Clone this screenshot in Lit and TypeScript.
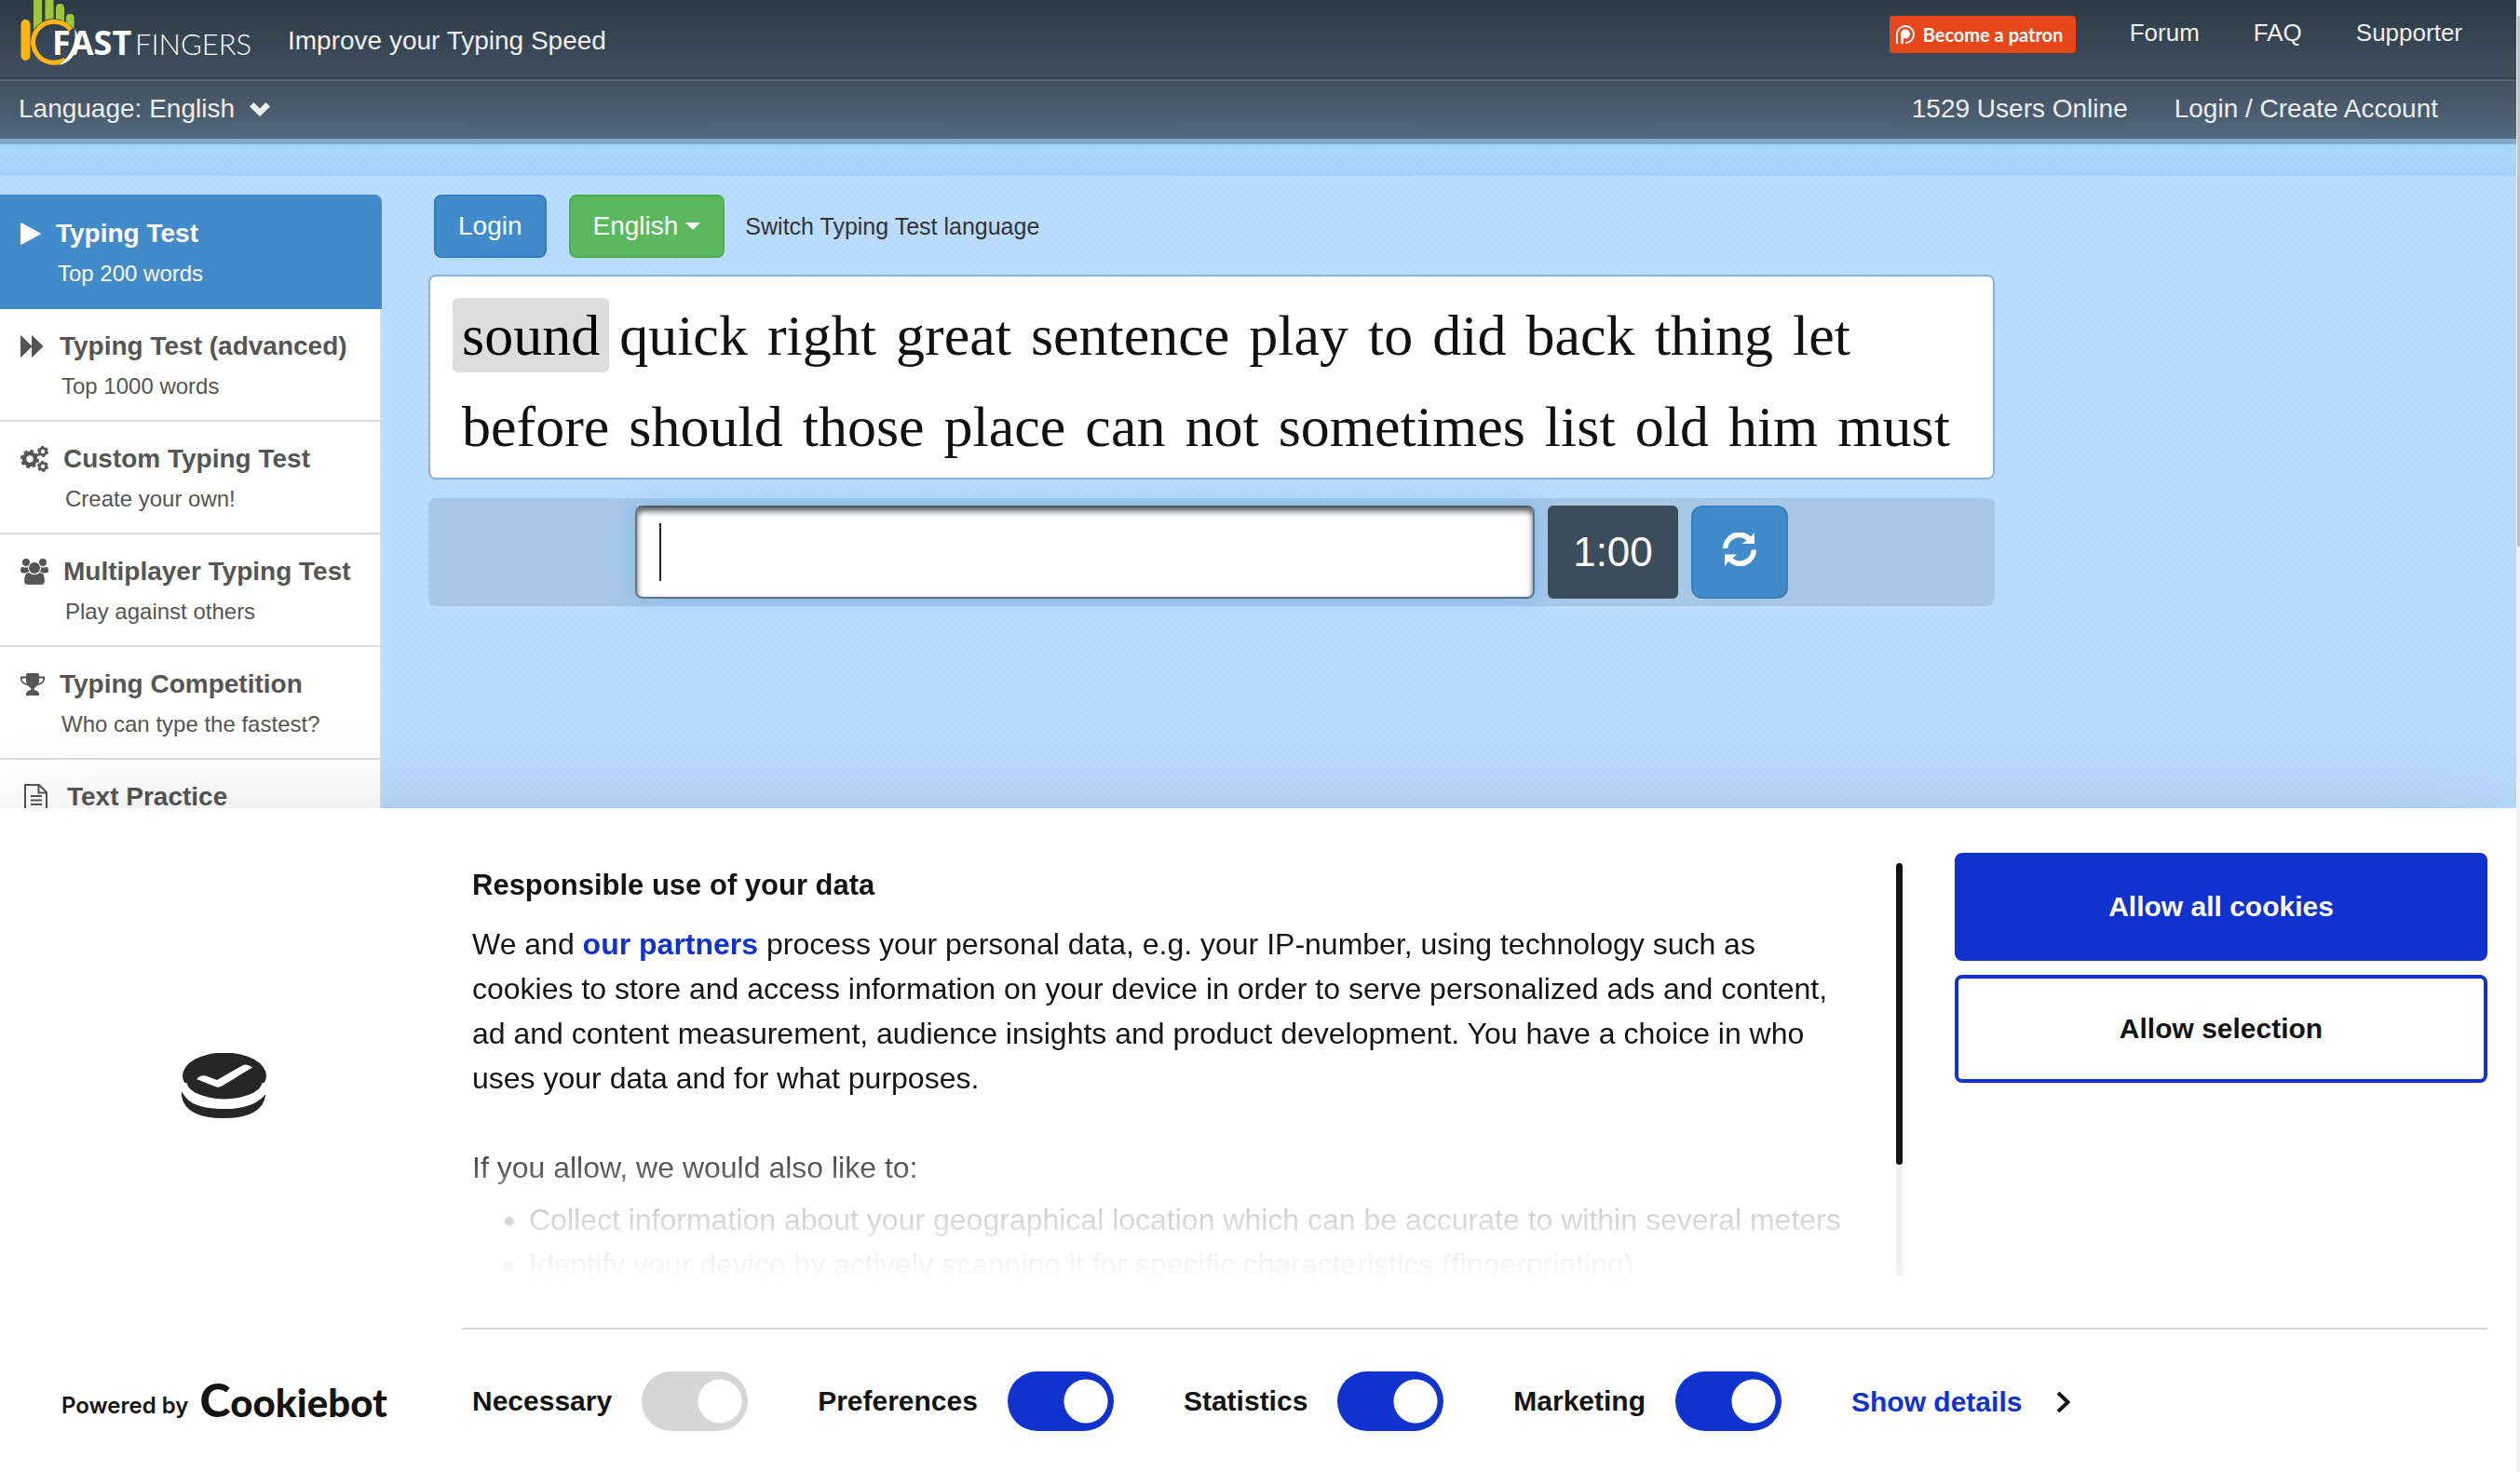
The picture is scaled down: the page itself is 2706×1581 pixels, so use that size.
import { LitElement, html, svg, css, type SVGTemplateResult } from "lit";
import { customElement, state } from "lit/decorators.js";
import { classMap } from "lit/directives/class-map.js";

interface MenuEntry {
  title: string;
  note: string;
  width: number;
  height: number;
  icon: SVGTemplateResult;
}

interface Consent {
  id: string;
  label: string;
  checked: boolean;
  locked: boolean;
}

const gear = (cx: number, cy: number, r: number, teeth: number) => {
  const rim = r * 0.86;
  const period = (2 * Math.PI * rim) / teeth;
  return svg`
    <circle cx=${cx} cy=${cy} r=${r * 0.6} fill="none" stroke="currentColor" stroke-width=${r * 0.46}></circle>
    <circle cx=${cx} cy=${cy} r=${rim} fill="none" stroke="currentColor" stroke-width=${r * 0.28}
      stroke-dasharray="${period * 0.55} ${period * 0.45}"></circle>`;
};

const MENU: MenuEntry[] = [
  {
    title: "Typing Test",
    note: "Top 200 words",
    width: 22,
    height: 24,
    icon: svg`<path fill="currentColor" d="M0 1Q0 -.3 1.2 .4L21.6 11.4Q22.6 12 21.6 12.6L1.2 23.6Q0 24.3 0 23Z"></path>`,
  },
  {
    title: "Typing Test (advanced)",
    note: "Top 1000 words",
    width: 26,
    height: 24,
    icon: svg`<path fill="currentColor" d="M0 .6Q0 -.3 .8 .4L12 11.4V.6Q12 -.3 12.8 .4L24 11.4Q24.6 12 24 12.6L12.8 23.6Q12 24.3 12 23.4V12.6L.8 23.6Q0 24.3 0 23.4Z"></path>`,
  },
  {
    title: "Custom Typing Test",
    note: "Create your own!",
    width: 30,
    height: 28,
    icon: svg`${gear(10, 14, 10, 8)}${gear(24, 6, 6, 6)}${gear(24, 22, 6, 6)}`,
  },
  {
    title: "Multiplayer Typing Test",
    note: "Play against others",
    width: 30,
    height: 28,
    icon: svg`
      <g fill="currentColor">
        <circle cx="6" cy="4" r="4"></circle>
        <circle cx="24" cy="4" r="4"></circle>
        <path d="M2.4 9Q6 10.4 8.4 8.4Q8 12 10 15.4H3Q0 15.4 0 13Q0 9 2.4 9Z"></path>
        <path d="M27.600 9Q24 10.400 21.600 8.400Q22 12 20 15.400H27Q30 15.400 30 13Q30 9 27.600 9Z"></path>
      </g>
      <path fill="currentColor" stroke="#fff" stroke-width="1" d="M9 14.600Q15 19 21 14.600Q26.400 15 26.400 24Q26.400 28.400 22 28.400H8Q3.600 28.400 3.600 24Q3.600 15 9 14.600Z"></path>
      <circle cx="15" cy="10" r="6.500" fill="currentColor" stroke="#fff" stroke-width="1"></circle>`,
  },
  {
    title: "Typing Competition",
    note: "Who can type the fastest?",
    width: 26,
    height: 24,
    icon: svg`
      <path fill="currentColor" d="M6 2Q6 0 8 0H18Q20 0 20 2V8Q20 13 16 15Q14.500 16 14.500 18Q19 18.500 20 22V24H6V22Q7 18.500 11.500 18Q11.500 16 10 15Q6 13 6 8Z"></path>
      <path fill="none" stroke="currentColor" stroke-width="1.800" d="M6 4.500H.9V7Q1.500 11.500 9 12.400M20 4.500H25.100V7Q24.500 11.500 17 12.400"></path>`,
  },
  {
    title: "Text Practice",
    note: "Practice your own text",
    width: 34,
    height: 28,
    icon: svg`
      <g fill="none" stroke="currentColor" stroke-width="2">
        <path d="M6 1H20L28 9V27H5V1Z"></path>
        <path d="M19.500 1V9.500H28"></path>
        <path d="M11 13H23M11 17.500H23M11 22H23"></path>
      </g>`,
  },
];

const WORDS = (
  "sound quick right great sentence play to did back thing let " +
  "before should those place can not sometimes list old him must"
).split(" ");

@customElement("app-root")
export class AppRoot extends LitElement {
  @state() private active = 0;

  @state() private consents: Consent[] = [
    { id: "necessary", label: "Necessary", checked: true, locked: true },
    { id: "preferences", label: "Preferences", checked: true, locked: false },
    { id: "statistics", label: "Statistics", checked: true, locked: false },
    { id: "marketing", label: "Marketing", checked: true, locked: false },
  ];

  static styles = css`
    :host {
      --sans: "Liberation Sans", Arial, sans-serif;
      --blue: #428bca;
      --consent: #1032cf;
      --check: repeating-conic-gradient(rgba(0, 30, 60, 0.02) 0 25%, transparent 0 50%);
      display: block;
      position: relative;
      height: 100vh;
      overflow: hidden;
      background: var(--check) 0 0 / 8px 8px, #bbddff;
      font-family: var(--sans);
      font-size: 28px;
      line-height: 32px;
      color: #333;
    }
    *, *::before, *::after { box-sizing: border-box; }
    a { color: inherit; text-decoration: none; }
    button, input { font-family: inherit; font-size: inherit; }
    svg { display: block; flex: none; }

    .top, .sub {
      display: flex;
      justify-content: space-between;
      color: #eee;
    }
    .top {
      height: 85px;
      align-items: flex-start;
      padding: 0 62px 0 20px;
      border-bottom: 2px solid #33414e;
      background: var(--check) 0 0 / 8px 8px, linear-gradient(#2d3a46, #3f505f);
    }
    .brand { display: flex; gap: 28px; }
    .logo { overflow: hidden; }
    .fast { font: 700 36px "Open Sans", sans-serif; fill: #fff; }
    .fingers { font: 300 31px Lato, sans-serif; fill: #fff; }
    .slogan { margin: 0; padding-top: 28px; }
    .links { display: flex; gap: 58px; font-size: 26px; line-height: 30px; }
    .links a { padding-top: 20px; }
    .links .patron {
      display: flex;
      align-items: center;
      gap: 8px;
      height: 40px;
      margin-top: 17px;
      padding: 0 10px 0 6px;
      border-radius: 4px;
      background: #e8461b;
      color: #fff;
      font: 700 20px/24px Lato, sans-serif;
      width: 200px;
      white-space: nowrap;
    }
    .sub {
      height: 64px;
      align-items: center;
      padding: 0 88px 2px 20px;
      border-top: 2px solid #52636f;
      background: var(--check) 0 0 / 8px 8px, linear-gradient(#42525f, #4c5f71 60%, #546b84);
    }
    .language {
      display: flex;
      align-items: center;
      gap: 16px;
      padding: 0;
      border: 0;
      background: none;
      color: inherit;
    }
    .account { display: flex; gap: 50px; }
    .band {
      height: 40px;
      border-top: 6px solid #84a9cc;
      background: var(--check) 0 0 / 8px 8px, linear-gradient(#a9d9ff, #a7d3fb);
    }

    .body { display: flex; align-items: flex-start; gap: 50px; padding-top: 20px; }
    .menu { flex: none; width: 410px; margin: 0; padding: 0; list-style: none; }
    .entry {
      display: grid;
      grid-template-columns: auto 1fr;
      column-gap: 16px;
      padding: 20px 8px 13px 22px;
      border-right: 2px solid #ddd;
      border-bottom: 2px solid #ddd;
      background: #fff;
      color: #555;
    }
    .entry.active {
      border-color: var(--blue);
      border-top: 2px solid var(--blue);
      border-top-right-radius: 8px;
      background: var(--blue);
      color: #fff;
    }
    .entry svg { align-self: center; }
    .title { font-weight: 700; line-height: 40px; white-space: nowrap; }
    .note { grid-column: 2; padding-left: 2px; font-size: 24px; line-height: 46px; }

    .main { flex: 0 1 1682px; min-width: 0; }
    .tools { display: flex; align-items: center; gap: 24px; padding-left: 6px; }
    .btn {
      display: flex;
      align-items: center;
      gap: 8px;
      height: 68px;
      padding: 0 24px;
      border: 2px solid #357ebd;
      border-radius: 8px;
      background: var(--blue);
      color: #fff;
    }
    .btn.green { border-color: #4cae4c; background: #5cb85c; }
    .hint { margin-left: -2px; font-size: 25px; }
    .words {
      display: flex;
      flex-wrap: wrap;
      gap: 18px 1px;
      margin-top: 18px;
      padding: 23px 24px 15px;
      border: 2px solid #88b4dc;
      border-radius: 8px;
      background: #fff;
      font: 62px/80px "Liberation Serif", "Times New Roman", serif;
      color: #111;
    }
    .word { padding: 0 10px; border-radius: 6px; }
    .word.current { background: #ddd; color: #000; }
    .entrybar {
      display: flex;
      justify-content: center;
      gap: 14px;
      margin-top: 20px;
      padding: 8px;
      border-radius: 8px;
      background: #a7c7e7;
    }
    .type {
      flex: 0 1 966px;
      min-width: 0;
      height: 100px;
      padding: 0 24px;
      border: 2px solid #5f7488;
      border-top-color: #4b5966;
      border-radius: 8px;
      outline: none;
      background: linear-gradient(#222, #222) 24px 50% / 2px 62px no-repeat #fff;
      box-shadow: inset 0 4px 6px rgba(0, 0, 0, 0.65), 0 0 24px rgba(102, 175, 233, 0.6);
      font-size: 56px;
    }
    .timer {
      width: 140px;
      border-radius: 6px;
      background: #3c4d5b;
      color: #fff;
      font-size: 44px;
      line-height: 100px;
      text-align: center;
    }
    .btn.reload { height: 100px; width: 104px; padding: 0 0 6px; justify-content: center; border-radius: 12px; }

    .consent {
      position: absolute;
      left: 0;
      right: 0;
      bottom: 0;
      display: grid;
      grid-template-columns: 496px 1fr;
      padding-right: 35px;
      background: #fff;
      box-shadow: 0 64px 136px rgba(0, 0, 0, 0.3);
      font-size: 30px;
      line-height: 36px;
      color: #141414;
    }
    .seal { display: flex; justify-content: center; align-items: center; padding: 38px 14px 0 0; }
    .upper { display: flex; justify-content: space-between; padding: 48px 0 56px; }
    .info { display: flex; gap: 46px; flex: 0 1 1547px; padding: 11px 0 0 11px; }
    .scroll {
      flex: 1;
      height: 443px;
      overflow: hidden;
      font-size: 32px;
      line-height: 48px;
      -webkit-mask-image: linear-gradient(#000 290px, rgba(0, 0, 0, 0.65) 335px, rgba(0, 0, 0, 0.2) 375px, rgba(0, 0, 0, 0.08) 415px, rgba(0, 0, 0, 0.02));
      mask-image: linear-gradient(#000 290px, rgba(0, 0, 0, 0.65) 335px, rgba(0, 0, 0, 0.2) 375px, rgba(0, 0, 0, 0.08) 415px, rgba(0, 0, 0, 0.02));
    }
    .scroll h2 { margin: 0 0 15px; font-size: 31px; line-height: 48px; }
    .scroll p { margin: 0 0 48px; }
    .scroll a { color: var(--consent); font-weight: 700; }
    .scroll ul { margin: -40px 0 0; padding-left: 61px; }
    .rail { width: 7px; height: 443px; border-radius: 4px; background: #f1f1f1; }
    .thumb { height: 324px; border-radius: 4px; background: #141414; }
    .choices { display: flex; flex-direction: column; gap: 15px; flex: 0 1 572px; }
    .choice {
      height: 116px;
      border: 4px solid var(--consent);
      border-radius: 8px;
      background: #fff;
      color: #141414;
      font-weight: 700;
    }
    .choice.primary { background: var(--consent); color: #fff; }
    .powered {
      display: flex;
      align-items: center;
      align-self: start;
      gap: 12px;
      padding: 57px 0 0 66px;
      font: 600 24px/32px Inter, sans-serif;
    }
    .by { padding-top: 10px; }
    .bot { display: flex; align-items: baseline; font: 900 42px/40px Lato, sans-serif; white-space: nowrap; }
    .bot .cap { font-size: 50px; }
    .lower {
      display: flex;
      align-items: center;
      gap: 75px;
      padding: 45px 0 44px 11px;
      border-top: 2px solid #d6d6d6;
      font-weight: 700;
    }
    .toggle { display: flex; align-items: center; gap: 32px; }
    .switch {
      appearance: none;
      width: 114px;
      height: 64px;
      margin: 0;
      border-radius: 32px;
      background: radial-gradient(circle at 84px 32px, #fff 23px, transparent 24px), var(--consent);
    }
    .switch:not(:checked) {
      background: radial-gradient(circle at 30px 32px, #fff 23px, transparent 24px), #6b6b6b;
    }
    .switch:disabled {
      background: radial-gradient(circle at 84px 32px, #fff 23px, transparent 24px), #d6d6d6;
    }
    .details { display: flex; align-items: center; gap: 37px; padding-top: 2px; color: var(--consent); }
    .details svg { color: #141414; }

    .pagebar {
      position: absolute;
      top: 0;
      right: 0;
      bottom: 0;
      width: 4px;
      padding: 17px 0 0 1px;
      background: #f1f1f1;
    }
    .pagethumb { height: 570px; background: #c1c1c1; }
  `;

  private toggle(id: string) {
    this.consents = this.consents.map((c) => (c.id === id ? { ...c, checked: !c.checked } : c));
  }

  private renderHeader() {
    return html`
      <header>
        <div class="top">
          <div class="brand">
            <svg class="logo" width="261" height="80" viewBox="20 0 261 80" role="img" aria-label="10FastFingers">
              <g fill="#9dc63c">
                <path d="M36 32V0Q40 -6 45 0V24Q39 27 36 32Z"></path>
                <path d="M48.500 22V-3H57.500V20Q52 20 48.500 22Z"></path>
                <path d="M60 20V9Q60 4 64.500 4Q69 4 69 9V23Q65 20.500 60 20Z"></path>
                <path d="M71 24V19Q71 15 75.300 15Q79.600 15 79.600 19V31Q76 27 71 24Z"></path>
              </g>
              <rect x="22.500" y="21" width="10" height="44" rx="5" fill="#fdb515"></rect>
              <path fill="none" stroke="#fdb515" stroke-width="5" d="M76 32A22.500 22 0 1 0 70 64"></path>
              <path fill="#fff" d="M80 31Q84 52 64 70Q79 66 84 48Q85 38 80 31Z"></path>
              <text class="fast" x="56" y="59">FAST</text>
              <text class="fingers" x="145" y="59">FINGERS</text>
            </svg>
            <p class="slogan">Improve your Typing Speed</p>
          </div>
          <nav class="links">
            <a class="patron" href="#patron">
              <svg width="22" height="24" viewBox="0 0 22 24" aria-hidden="true">
                <path fill="none" stroke="#fff" stroke-width="2" d="M2 22V12A9 9 0 1 1 11 21"></path>
                <circle cx="11" cy="11.500" r="5" fill="#fff"></circle>
                <path stroke="#fff" stroke-width="3" d="M7.500 11V22"></path>
              </svg>
              Become a patron
            </a>
            <a href="#forum">Forum</a>
            <a href="#faq">FAQ</a>
            <a href="#supporter">Supporter</a>
          </nav>
        </div>
        <div class="sub">
          <button class="language" type="button">
            Language: English
            <svg width="22" height="15" viewBox="0 0 22 15" aria-hidden="true">
              <path fill="currentColor" d="M0 4.500L4.500 0L11 6.500L17.500 0L22 4.500L11 15Z"></path>
            </svg>
          </button>
          <div class="account">
            <span>1529 Users Online</span>
            <a href="#login">Login / Create Account</a>
          </div>
        </div>
        <div class="band"></div>
      </header>
    `;
  }

  private renderMenu() {
    return html`
      <ul class="menu">
        ${MENU.map(
          (m, i) => html`
            <li>
              <a
                href="#${i}"
                class=${classMap({ entry: true, active: i === this.active })}
                @click=${() => (this.active = i)}
              >
                <svg width=${m.width} height=${m.height} viewBox="0 0 ${m.width} ${m.height}" aria-hidden="true">
                  ${m.icon}
                </svg>
                <span class="title">${m.title}</span>
                <span class="note">${m.note}</span>
              </a>
            </li>
          `,
        )}
      </ul>
    `;
  }

  private renderTest() {
    return html`
      <main class="main">
        <div class="tools">
          <button class="btn" type="button">Login</button>
          <button class="btn green" type="button">
            English
            <svg width="16" height="8" viewBox="0 0 16 8" aria-hidden="true">
              <path fill="currentColor" d="M0 0H16L8 8Z"></path>
            </svg>
          </button>
          <span class="hint">Switch Typing Test language</span>
        </div>
        <div class="words">
          ${WORDS.map((w, i) => html`<span class=${classMap({ word: true, current: i === 0 })}>${w}</span>`)}
        </div>
        <div class="entrybar">
          <input class="type" type="text" aria-label="Type the words" autocomplete="off" />
          <div class="timer">1:00</div>
          <button class="btn reload" type="button" aria-label="Restart">
            <svg width="36" height="36" viewBox="0 0 36 36" aria-hidden="true">
              <g fill="currentColor">
                <path d="M0 17A17.500 17.500 0 0 1 30 4.600L34 0V12H20.500L25.500 8.400A12.200 12.200 0 0 0 5.400 17Z"></path>
                <path d="M36 18.500A17.500 17.500 0 0 1 6 31L2 36V23.500H15L10.500 27.400A12.200 12.200 0 0 0 30.600 18.500Z"></path>
              </g>
            </svg>
          </button>
        </div>
      </main>
    `;
  }

  private renderConsent() {
    return html`
      <section class="consent" role="dialog" aria-label="Responsible use of your data">
        <div class="seal">
          <svg width="92" height="71" viewBox="0 0 92 71" aria-hidden="true">
            <path fill="#262626" d="M0 35Q1 60 45 60Q89 60 90 35V46Q86 70 45 70Q4 70 0 46Z"></path>
            <ellipse cx="46" cy="32" rx="46" ry="28" fill="#fff"></ellipse>
            <ellipse cx="46" cy="24.500" rx="45" ry="25" fill="#262626"></ellipse>
            <path fill="#fff" d="M16 28Q20 23 26 24.500L38 29L66 13Q70 11 76 15.500L44 35Q40 38 36 36Z"></path>
            <path fill="none" stroke="#fff" stroke-width="9" d="M1 33Q8 55 46 55Q84 55 91 33"></path>
          </svg>
        </div>
        <div class="upper">
          <div class="info">
            <div class="scroll">
              <h2>Responsible use of your data</h2>
              <p>
                We and <a href="#partners">our partners</a> process your personal data, e.g. your IP-number, using
                technology such as cookies to store and access information on your device in order to serve
                personalized ads and content, ad and content measurement, audience insights and product development.
                You have a choice in who uses your data and for what purposes.
              </p>
              <p>If you allow, we would also like to:</p>
              <ul>
                <li>Collect information about your geographical location which can be accurate to within several meters</li>
                <li>Identify your device by actively scanning it for specific characteristics (fingerprinting)</li>
              </ul>
            </div>
            <div class="rail"><div class="thumb"></div></div>
          </div>
          <div class="choices">
            <button class="choice primary" type="button">Allow all cookies</button>
            <button class="choice" type="button">Allow selection</button>
          </div>
        </div>
        <div class="powered">
          <span class="by">Powered by</span>
          <span class="bot"><span class="cap">C</span><span>ookiebot</span></span>
        </div>
        <div class="lower">
          ${this.consents.map(
            (c) => html`
              <label class="toggle" for=${c.id}>
                ${c.label}
                <input
                  class="switch"
                  type="checkbox"
                  id=${c.id}
                  .checked=${c.checked}
                  ?disabled=${c.locked}
                  @change=${() => this.toggle(c.id)}
                />
              </label>
            `,
          )}
          <a class="details" href="#details">
            Show details
            <svg width="16" height="22" viewBox="0 0 16 22" aria-hidden="true">
              <path fill="none" stroke="currentColor" stroke-width="4" d="M2 1L12.500 11L2 21"></path>
            </svg>
          </a>
        </div>
      </section>
    `;
  }

  render() {
    return html`
      ${this.renderHeader()}
      <div class="body">${this.renderMenu()}${this.renderTest()}</div>
      ${this.renderConsent()}
      <div class="pagebar"><div class="pagethumb"></div></div>
    `;
  }
}
